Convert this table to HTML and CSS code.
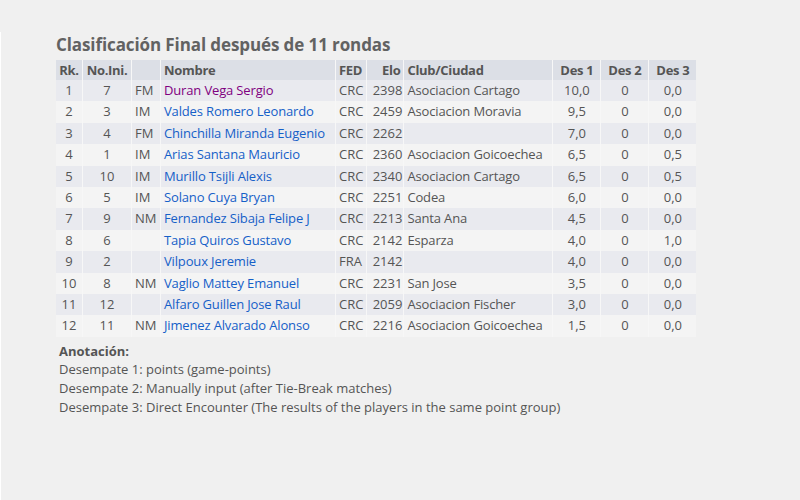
FILE: index.html
```html
<!DOCTYPE html>
<html>
<head>
    <meta charset="utf-8">
    <title>Clasificación Final</title>
    <link rel="stylesheet" href="styles.css">
</head>
<body>
    <div class="page">
        <h2 class="title">Clasificación Final después de 11 rondas</h2>
        <table class="standings">
            <tr>
                <th class="c-rk">Rk.</th>
                <th class="c-no">No.Ini.</th>
                <th class="c-tit"></th>
                <th class="c-name">Nombre</th>
                <th class="c-fed">FED</th>
                <th class="c-elo">Elo</th>
                <th class="c-club">Club/Ciudad</th>
                <th class="c-tb">Des 1</th>
                <th class="c-tb">Des 2</th>
                <th class="c-tb">Des 3</th>
            </tr>
            <tr class="odd"><td class="c-rk">1</td><td class="c-no">7</td><td class="c-tit">FM</td><td class="c-name"><a href="#" class="visited">Duran Vega Sergio</a></td><td class="c-fed">CRC</td><td class="c-elo">2398</td><td class="c-club">Asociacion Cartago</td><td class="c-tb">10,0</td><td class="c-tb">0</td><td class="c-tb">0,0</td></tr>
            <tr class="even"><td class="c-rk">2</td><td class="c-no">3</td><td class="c-tit">IM</td><td class="c-name"><a href="#">Valdes Romero Leonardo</a></td><td class="c-fed">CRC</td><td class="c-elo">2459</td><td class="c-club">Asociacion Moravia</td><td class="c-tb">9,5</td><td class="c-tb">0</td><td class="c-tb">0,0</td></tr>
            <tr class="odd"><td class="c-rk">3</td><td class="c-no">4</td><td class="c-tit">FM</td><td class="c-name"><a href="#">Chinchilla Miranda Eugenio</a></td><td class="c-fed">CRC</td><td class="c-elo">2262</td><td class="c-club"></td><td class="c-tb">7,0</td><td class="c-tb">0</td><td class="c-tb">0,0</td></tr>
            <tr class="even"><td class="c-rk">4</td><td class="c-no">1</td><td class="c-tit">IM</td><td class="c-name"><a href="#">Arias Santana Mauricio</a></td><td class="c-fed">CRC</td><td class="c-elo">2360</td><td class="c-club">Asociacion Goicoechea</td><td class="c-tb">6,5</td><td class="c-tb">0</td><td class="c-tb">0,5</td></tr>
            <tr class="odd"><td class="c-rk">5</td><td class="c-no">10</td><td class="c-tit">IM</td><td class="c-name"><a href="#">Murillo Tsijli Alexis</a></td><td class="c-fed">CRC</td><td class="c-elo">2340</td><td class="c-club">Asociacion Cartago</td><td class="c-tb">6,5</td><td class="c-tb">0</td><td class="c-tb">0,5</td></tr>
            <tr class="even"><td class="c-rk">6</td><td class="c-no">5</td><td class="c-tit">IM</td><td class="c-name"><a href="#">Solano Cuya Bryan</a></td><td class="c-fed">CRC</td><td class="c-elo">2251</td><td class="c-club">Codea</td><td class="c-tb">6,0</td><td class="c-tb">0</td><td class="c-tb">0,0</td></tr>
            <tr class="odd"><td class="c-rk">7</td><td class="c-no">9</td><td class="c-tit">NM</td><td class="c-name"><a href="#">Fernandez Sibaja Felipe J</a></td><td class="c-fed">CRC</td><td class="c-elo">2213</td><td class="c-club">Santa Ana</td><td class="c-tb">4,5</td><td class="c-tb">0</td><td class="c-tb">0,0</td></tr>
            <tr class="even"><td class="c-rk">8</td><td class="c-no">6</td><td class="c-tit"></td><td class="c-name"><a href="#">Tapia Quiros Gustavo</a></td><td class="c-fed">CRC</td><td class="c-elo">2142</td><td class="c-club">Esparza</td><td class="c-tb">4,0</td><td class="c-tb">0</td><td class="c-tb">1,0</td></tr>
            <tr class="odd"><td class="c-rk">9</td><td class="c-no">2</td><td class="c-tit"></td><td class="c-name"><a href="#">Vilpoux Jeremie</a></td><td class="c-fed">FRA</td><td class="c-elo">2142</td><td class="c-club"></td><td class="c-tb">4,0</td><td class="c-tb">0</td><td class="c-tb">0,0</td></tr>
            <tr class="even"><td class="c-rk">10</td><td class="c-no">8</td><td class="c-tit">NM</td><td class="c-name"><a href="#">Vaglio Mattey Emanuel</a></td><td class="c-fed">CRC</td><td class="c-elo">2231</td><td class="c-club">San Jose</td><td class="c-tb">3,5</td><td class="c-tb">0</td><td class="c-tb">0,0</td></tr>
            <tr class="odd"><td class="c-rk">11</td><td class="c-no">12</td><td class="c-tit"></td><td class="c-name"><a href="#">Alfaro Guillen Jose Raul</a></td><td class="c-fed">CRC</td><td class="c-elo">2059</td><td class="c-club">Asociacion Fischer</td><td class="c-tb">3,0</td><td class="c-tb">0</td><td class="c-tb">0,0</td></tr>
            <tr class="even"><td class="c-rk">12</td><td class="c-no">11</td><td class="c-tit">NM</td><td class="c-name"><a href="#">Jimenez Alvarado Alonso</a></td><td class="c-fed">CRC</td><td class="c-elo">2216</td><td class="c-club">Asociacion Goicoechea</td><td class="c-tb">1,5</td><td class="c-tb">0</td><td class="c-tb">0,0</td></tr>
        </table>

        <div class="notes">
            <strong>Anotación:</strong>
            Desempate 1: points (game-points)<br>
            Desempate 2: Manually input (after Tie-Break matches)<br>
            Desempate 3: Direct Encounter (The results of the players in the same point group)
        </div>
    </div>
</body>
</html>
```

FILE: styles.css
```css
body {
    margin: 0;
    background-color: #f0f0f0;
    font-family: "Open Sans", "Noto Sans", sans-serif;
    font-size: 13px;
    color: #555555;
}

.page {
    margin-top: 32px;
    min-height: 468px;
    border-left: 1px solid #ffffff;
    padding-left: 55px;
    box-sizing: border-box;
}

.title {
    margin: 0;
    padding-top: 0;
    font-size: 17px;
    line-height: 25px;
    font-weight: 700;
    color: #626262;
    letter-spacing: -0.1px;
}

.standings {
    border-collapse: collapse;
    margin-top: 3px;
    table-layout: fixed;
}

.standings th,
.standings td {
    padding: 2px 3px;
    line-height: 17.4px;
    border-left: 1px solid #f7f7f7;
    white-space: nowrap;
    overflow: hidden;
}

.standings th:first-child,
.standings td:first-child {
    border-left: none;
}

.standings th {
    background-color: #dcdfe6;
    font-weight: 700;
    color: #555555;
    line-height: 16px;
    letter-spacing: -0.3px;
}

.standings tr.odd td {
    background-color: #e9eaef;
}

.standings tr.even td {
    background-color: #f4f4f4;
}

.standings a {
    color: #1560c8;
    text-decoration: none;
    letter-spacing: -0.15px;
}

.standings a.visited {
    color: #800080;
}

.c-rk { width: 20px; text-align: center; }
.c-no { width: 42px; text-align: center; }
.c-tit { width: 22px; text-align: left; }
.c-name { width: 168px; text-align: left; }
.c-fed { width: 23px; text-align: left; }
.c-elo { width: 29px; text-align: right; }
.c-club { width: 142px; text-align: left; }
.c-tb { width: 41px; text-align: center; }

.standings td.c-elo {
    padding-left: 2px;
    padding-right: 1px;
    width: 33px;
}

.standings td.c-club {
    letter-spacing: -0.15px;
}

.notes {
    margin-top: 6px;
    padding-left: 3px;
    line-height: 19px;
}

.notes strong {
    display: block;
    line-height: 17px;
    color: #555555;
}
```
